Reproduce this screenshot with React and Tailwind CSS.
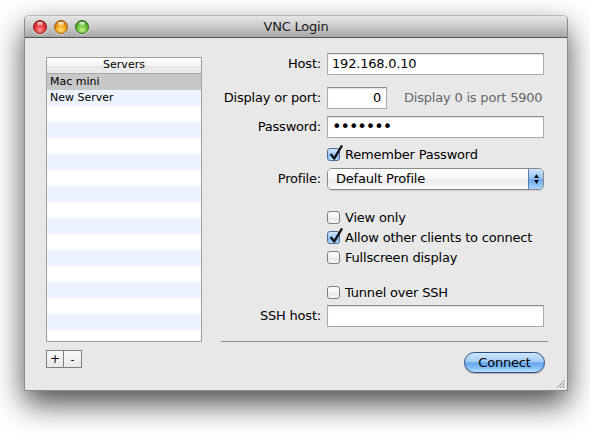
import React from "react";

function Check({ checked }) {
  return (
    <span
      className={
        "relative w-[13px] h-[13px] shrink-0 rounded-[3px] border " +
        (checked
          ? "border-[#4a6a98] bg-[linear-gradient(#d3e7fb,#9cc8f4_50%,#73aef0_51%,#b9defc)]"
          : "border-[#7e7e7e] bg-[linear-gradient(#ffffff,#f2f2f2_50%,#e4e4e4_51%,#fafafa)]")
      }
    >
      {checked && (
        <svg
          className="absolute left-[1px] top-[-4px] overflow-visible"
          width="14"
          height="16"
          viewBox="0 0 14 16"
        >
          <path
            d="M2.2 9.6 L5.2 13.6 L12.6 1.2"
            stroke="#111"
            strokeWidth="2.3"
            fill="none"
            strokeLinecap="round"
            strokeLinejoin="round"
          />
        </svg>
      )}
    </span>
  );
}

function CheckRow({ checked, label, className = "" }) {
  return (
    <div className={"flex items-center gap-[5px] h-[20px] " + className}>
      <Check checked={checked} />
      <span className="text-[13px] tracking-[-0.2px] text-black leading-none">{label}</span>
    </div>
  );
}

const fieldCls =
  "h-[22px] bg-white border border-[#aaaaaa] border-t-[#8c8c8c] shadow-[inset_0_1px_1px_rgba(0,0,0,0.12)] flex items-center px-[4px] text-[13px] tracking-[-0.2px] text-black";

const labelCls = "text-right text-[13px] tracking-[-0.2px] text-black whitespace-nowrap";

function Light({ color }) {
  const map = {
    red: "bg-[radial-gradient(circle_at_50%_75%,#ff9a9a_0%,#e8343a_45%,#a4111a_100%)] border-[#8a1a1a]",
    orange:
      "bg-[radial-gradient(circle_at_50%_75%,#ffe27a_0%,#f3a21d_45%,#b45c08_100%)] border-[#9a5a10]",
    green:
      "bg-[radial-gradient(circle_at_50%_75%,#c8f58a_0%,#6cc23a_45%,#2f7d14_100%)] border-[#2f6a18]",
  };
  return (
    <span
      className={
        "relative w-[14px] h-[14px] rounded-full border shadow-[0_1px_1px_rgba(255,255,255,0.6)] " +
        map[color]
      }
    >
      <span className="absolute left-[3px] top-[1px] w-[6px] h-[4px] rounded-full bg-[linear-gradient(rgba(255,255,255,0.95),rgba(255,255,255,0.15))]" />
    </span>
  );
}

export default function App() {
  const rows = Array.from({ length: 17 });
  return (
    <div className="w-[590px] h-[433px] bg-white overflow-hidden pt-[15px] pl-[24px] font-['DejaVu_Sans',sans-serif]">
      <div className="w-[544px] h-[376px] flex flex-col rounded-t-[5px] bg-[#e8e8e8] border border-[#8a8a8a] border-t-[#b8b8b8] shadow-[0_13px_30px_rgba(0,0,0,0.7)] overflow-hidden">
        {/* Title bar */}
        <div className="relative h-[22px] shrink-0 flex items-center bg-[linear-gradient(#e6e6e6,#cbcbcb_50%,#a7a7a7)] border-b border-[#545454]">
          <div className="absolute left-[8px] top-[4px] flex gap-[7px]">
            <Light color="red" />
            <Light color="orange" />
            <Light color="green" />
          </div>
          <div className="w-full text-center text-[13px] tracking-[-0.2px] text-[#1a1a1a] leading-none">
            VNC Login
          </div>
        </div>

        {/* Body */}
        <div className="relative flex-1 flex">
          {/* Left column */}
          <div className="pl-[21px] pt-[19px] flex flex-col">
            <div className="w-[156px] h-[285px] bg-white border border-[#9f9f9f] overflow-hidden flex flex-col">
              <div className="h-[16px] shrink-0 flex items-center justify-center text-[11px] text-black border-b border-[#a8a8a8] bg-[linear-gradient(#ffffff,#f3f3f3_50%,#e6e6e6_51%,#ececec)]">
                Servers
              </div>
              <div className="h-[16px] shrink-0 bg-[#c8c8c8] text-[11px] text-black flex items-center pl-[3px]">
                Mac mini
              </div>
              <div className="h-[16px] shrink-0 bg-[#edf3fe] text-[11px] text-black flex items-center pl-[3px]">
                New Server
              </div>
              {rows.map((_, i) => (
                <div
                  key={i}
                  className={
                    "h-[16px] shrink-0 " +
                    (i % 2 === 0 ? "bg-white" : "bg-[#edf3fe]")
                  }
                />
              ))}
            </div>
            <div className="mt-[8px] flex">
              <div className="w-[18px] h-[18px] border border-[#7f7f7f] bg-[linear-gradient(#fafafa,#e9e9e9)] flex items-center justify-center text-[12px] leading-none text-black">
                +
              </div>
              <div className="w-[18px] h-[18px] border border-l-0 border-[#7f7f7f] bg-[linear-gradient(#fafafa,#e9e9e9)] flex items-center justify-center text-[11px] leading-none text-black">
                -
              </div>
            </div>
          </div>

          {/* Right column */}
          <div className="ml-[19px] w-[327px] flex flex-col">
            <div className="mt-[15px] grid grid-cols-[100px_217px] gap-x-[6px] items-center h-[22px]">
              <span className={labelCls}>Host:</span>
              <div className={fieldCls}>192.168.0.10</div>
            </div>
            <div className="mt-[12px] grid grid-cols-[100px_217px] gap-x-[6px] items-center h-[22px]">
              <span className={labelCls}>Display or port:</span>
              <div className="flex items-center gap-[17px]">
                <div className={fieldCls + " w-[60px] justify-end pr-[5px]"}>0</div>
                <span className="text-[13px] tracking-[-0.2px] text-[#666666] whitespace-nowrap">
                  Display 0 is port 5900
                </span>
              </div>
            </div>
            <div className="mt-[7px] grid grid-cols-[100px_217px] gap-x-[6px] items-center h-[22px]">
              <span className={labelCls}>Password:</span>
              <div className="h-[22px] bg-white border border-[#aaaaaa] border-t-[#8c8c8c] shadow-[inset_0_1px_1px_rgba(0,0,0,0.12)] flex items-center pl-[4px] text-[16px] tracking-[-1px] text-black">
                •••••••
              </div>
            </div>
            <div className="mt-[8px] pl-[106px] h-[16px] flex items-center">
              <CheckRow checked label="Remember Password" />
            </div>
            <div className="mt-[6px] grid grid-cols-[100px_217px] gap-x-[6px] items-center h-[22px]">
              <span className={labelCls}>Profile:</span>
              <div className="h-[22px] flex rounded-[5px] border border-[#8a8a8a] overflow-hidden shadow-[0_1px_1px_rgba(0,0,0,0.12)]">
                <div className="flex-1 flex items-center pl-[8px] text-[13px] tracking-[-0.2px] text-black bg-[linear-gradient(#ffffff,#f6f6f6_50%,#ebebeb_51%,#f7f7f7)]">
                  Default Profile
                </div>
                <div className="w-[15px] border-l border-[#5a7eb0] flex flex-col items-center justify-center gap-[2px] bg-[linear-gradient(#cfe4fb,#92c1f3_50%,#6aa8ef_51%,#a8d4fb)]">
                  <svg width="5" height="4" viewBox="0 0 5 4">
                    <path d="M2.5 0 L5 4 L0 4 Z" fill="#111" />
                  </svg>
                  <svg width="5" height="4" viewBox="0 0 5 4">
                    <path d="M0 0 L5 0 L2.5 4 Z" fill="#111" />
                  </svg>
                </div>
              </div>
            </div>
            <div className="mt-[17px] pl-[106px] flex flex-col">
              <CheckRow label="View only" />
              <CheckRow checked label="Allow other clients to connect" />
              <CheckRow label="Fullscreen display" />
              <CheckRow label="Tunnel over SSH" className="mt-[15px]" />
            </div>
            <div className="mt-[3px] grid grid-cols-[100px_217px] gap-x-[6px] items-center h-[22px]">
              <span className={labelCls}>SSH host:</span>
              <div className={fieldCls}></div>
            </div>
            <div className="mt-[14px] h-px bg-[#8f8f8f]" />
            <div className="mt-[10px] flex justify-end pr-[3px]">
              <div className="w-[81px] h-[21px] rounded-full border border-[#284d85] flex items-center justify-center text-[13px] tracking-[-0.2px] text-black shadow-[0_1px_1px_rgba(0,0,0,0.25)] bg-[linear-gradient(#d2e8fd,#a2cbf5_45%,#62a6ee_52%,#85c1f7_80%,#bfe2fe)]">
                Connect
              </div>
            </div>
          </div>

          {/* resize grip */}
          <svg
            className="absolute right-[1px] bottom-[1px]"
            width="11"
            height="11"
            viewBox="0 0 11 11"
          >
            <path d="M10 2 L2 10 M10 5 L5 10 M10 8 L8 10" stroke="#8a8a8a" strokeWidth="1" />
            <path d="M11 2.5 L2.5 11 M11 5.5 L5.5 11 M11 8.5 L8.5 11" stroke="#ffffff" strokeWidth="0.8" />
          </svg>
        </div>
      </div>
    </div>
  );
}
